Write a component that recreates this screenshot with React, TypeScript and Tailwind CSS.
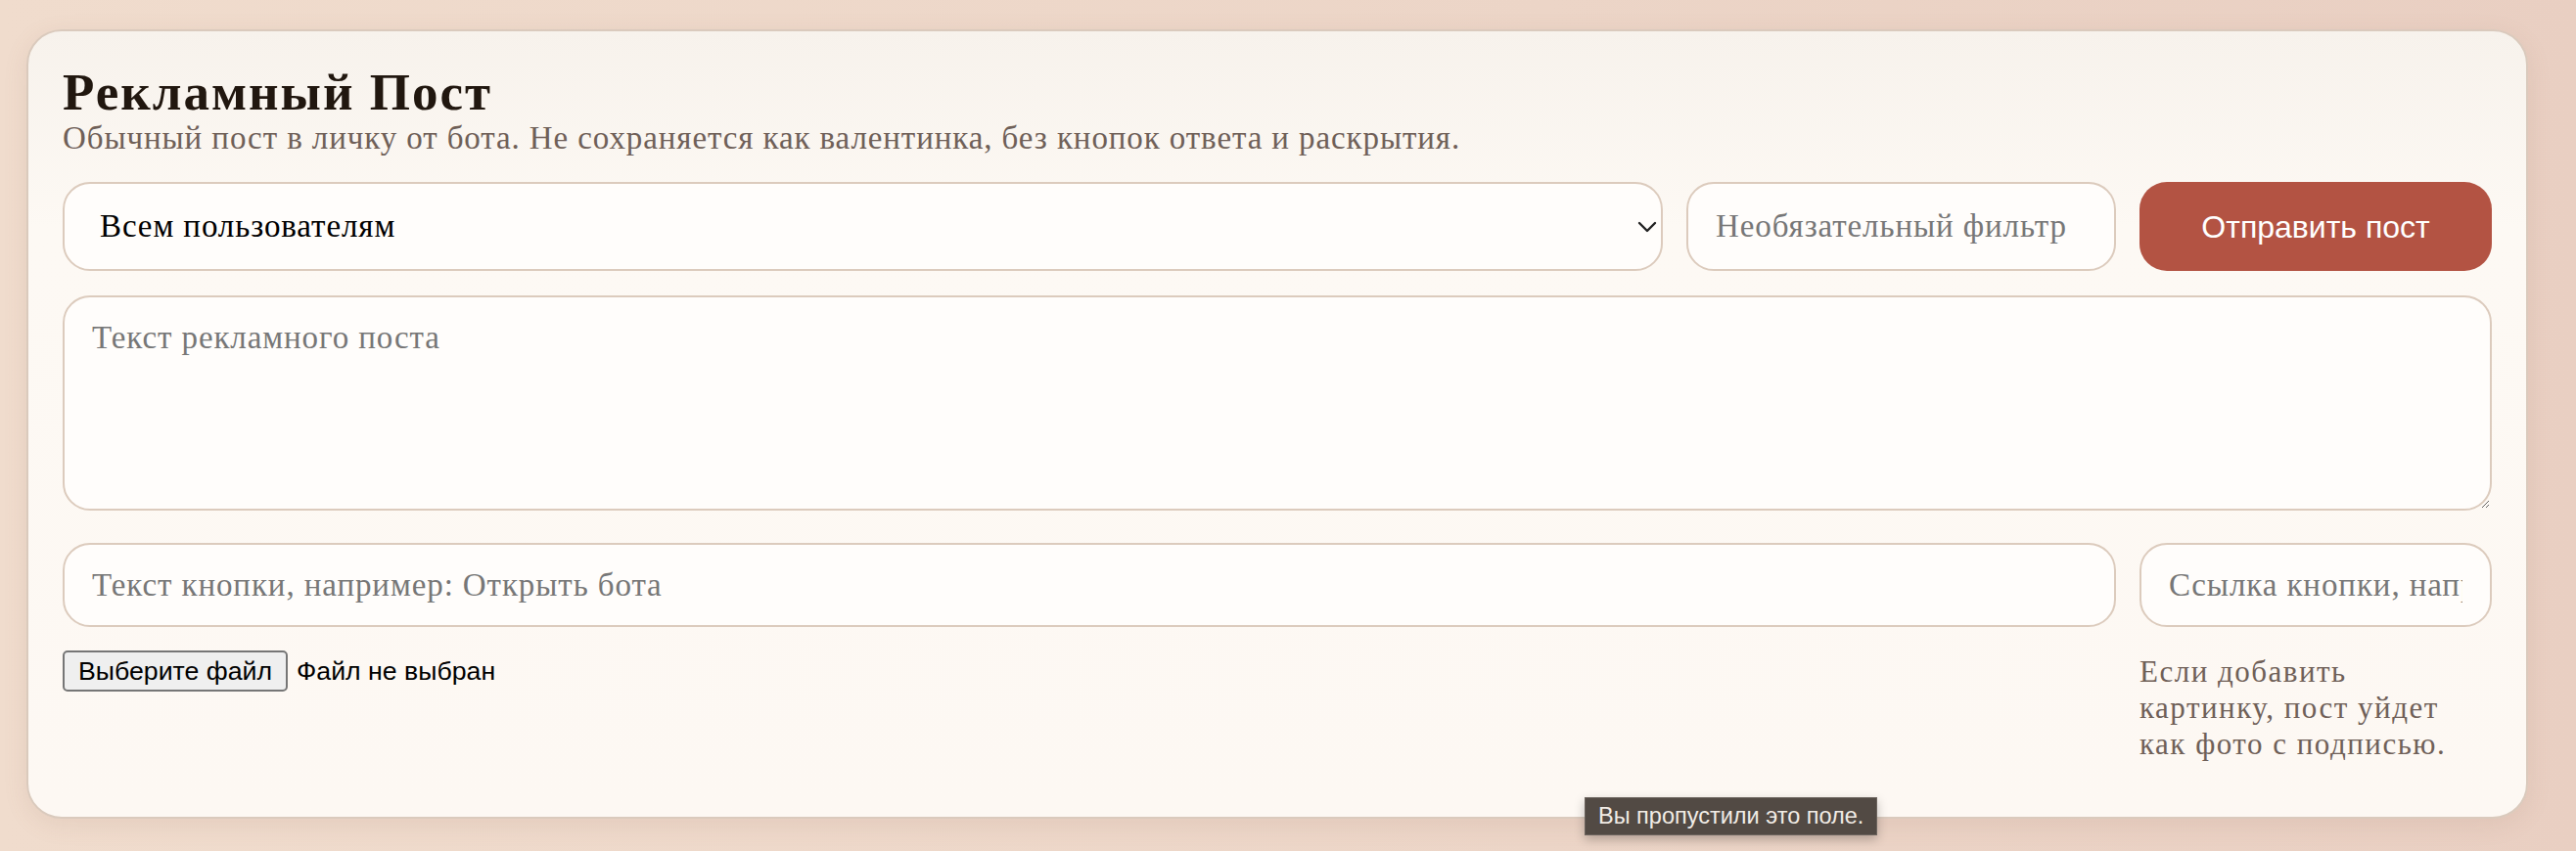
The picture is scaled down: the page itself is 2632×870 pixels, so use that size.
import { ChevronDown } from "lucide-react";

const serif = "font-['Liberation_Serif','DejaVu_Serif',serif]";
const sans = "font-['Liberation_Sans',Arial,sans-serif]";

const field =
  "w-full rounded-[28px] border-2 border-[#dccbbd] bg-[#fffdfb] text-[33px] tracking-[0.9px] text-black outline-none placeholder:text-[#777]";

export default function App() {
  return (
    <div className="relative min-h-[870px] w-full bg-[linear-gradient(90deg,#f0dccd_0%,#ecd5c7_60%,#e9cfc2_100%)] pt-[30px]">
      <div
        className={`ml-[27px] w-[2556px] rounded-[36px] border-2 border-[#dacabd] bg-[linear-gradient(180deg,#f7f2ec_0%,#fdf9f4_25%,#fdf8f3_100%)] px-[35px] pt-[35px] pb-[56px] shadow-[0_6px_24px_rgba(150,110,90,0.12)] ${serif}`}
      >
        <h1 className="text-[53px] leading-[54px] font-bold tracking-[2px] text-[#21170f]">Рекламный Пост</h1>
        <p className="text-[33px] leading-[40px] tracking-[0.9px] text-[#6f6058]">
          Обычный пост в личку от бота. Не сохраняется как валентинка, без кнопок ответа и раскрытия.
        </p>

        <div className="mt-[25px] grid grid-cols-[1fr_439px_360px] gap-x-6 gap-y-6">
          <div className="relative">
            <select
              className={`${field} h-[91px] appearance-none pl-[36px] pr-14 text-[31px]`}
              defaultValue="all"
            >
              <option value="all">Всем пользователям</option>
              <option value="active">Активным пользователям</option>
            </select>
            <ChevronDown
              size={32}
              strokeWidth={1.8}
              className="pointer-events-none absolute top-1/2 right-0 -translate-y-1/2 text-[#222]"
            />
          </div>
          <input className={`${field} h-[91px] px-[28px]`} placeholder="Необязательный фильтр" />
          <button
            className={`h-[91px] rounded-[28px] bg-[#b35343] text-[32px] text-white ${sans}`}
          >
            Отправить пост
          </button>

          <textarea
            className={`${field} col-span-3 mt-px mb-[9px] h-[220px] px-[28px] py-[22px] leading-[38px]`}
            placeholder="Текст рекламного поста"
          />

          <input
            className={`${field} col-span-2 h-[86px] px-[28px]`}
            placeholder="Текст кнопки, например: Открыть бота"
          />
          <input className={`${field} h-[86px] px-[28px]`} placeholder="Ссылка кнопки, например https://t.me/bot" />

          <div className={`col-span-2 flex items-start gap-[9px] text-[26.7px] ${sans}`}>
            <button className="h-[42px] rounded-[5px] border-2 border-[#767676] bg-[#efefef] px-[14px] leading-[36px] text-black">
              Выберите файл
            </button>
            <span className="leading-[42px] text-black">Файл не выбран</span>
          </div>
          <p className="mt-[3px] max-w-[330px] text-[31px] leading-[37px] tracking-[1.5px] text-[#6f6058]">
            Если добавить картинку, пост уйдет как фото с подписью.
          </p>
        </div>
      </div>

      <div
        className={`absolute top-[815px] left-[1619px] border border-[#6b635d] bg-[#524a44] px-[13px] py-[4px] text-[23.5px] leading-[29px] text-[#f1ece6] shadow-[0_4px_10px_rgba(0,0,0,0.25)] ${sans}`}
      >
        Вы пропустили это поле.
      </div>
    </div>
  );
}
